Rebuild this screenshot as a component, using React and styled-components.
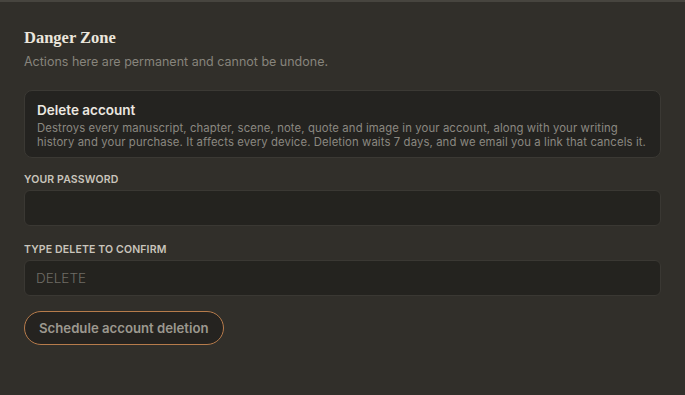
import React from 'react';
import styled, { createGlobalStyle } from 'styled-components';

const Global = createGlobalStyle`
  html, body {
    margin: 0;
    padding: 0;
    background: #312f2a;
  }
  body {
    font-family: Inter, 'Noto Sans', sans-serif;
    -webkit-font-smoothing: antialiased;
  }
`;

const Section = styled.section`
  box-sizing: border-box;
  width: 685px;
  min-height: 395px;
  border-top: 2px solid #47453f;
  background: #312f2a;
  padding: 25px 24px 24px 24px;
  display: flex;
  flex-direction: column;
`;

const Title = styled.h2`
  margin: 0;
  font-family: 'Liberation Serif', 'DejaVu Serif', serif;
  font-weight: 700;
  font-size: 16.5px;
  line-height: 22px;
  color: #ebe6dc;
`;

const Subtitle = styled.p`
  margin: 4px 0 0 0;
  font-size: 12.5px;
  line-height: 18px;
  color: #87847c;
`;

const Card = styled.div`
  margin-top: 19px;
  background: #242320;
  border: 1px solid #3b3934;
  border-radius: 8px;
  padding: 10px 8px 8px 12px;
`;

const CardTitle = styled.div`
  font-size: 13.5px;
  font-weight: 600;
  line-height: 18px;
  color: #ece8e0;
`;

const CardText = styled.p`
  margin: 2px 0 0 0;
  font-size: 11.3px;
  letter-spacing: 0.12px;
  line-height: 14px;
  color: #8b8880;
`;

const Field = styled.label`
  display: flex;
  flex-direction: column;
  gap: 3px;
  margin-top: ${p => p.$top}px;
`;

const Label = styled.span`
  font-size: 10.5px;
  font-weight: 600;
  letter-spacing: 0.15px;
  line-height: 14px;
  color: #c9c5bc;
  text-transform: uppercase;
`;

const Input = styled.input`
  box-sizing: border-box;
  height: 36px;
  width: 100%;
  background: #24231f;
  border: 1px solid #3a3833;
  border-radius: 6px;
  padding: 0 11px;
  font-family: Inter, 'Noto Sans', sans-serif;
  font-size: 13.5px;
  font-weight: 300;
  color: #e4e0d6;
  outline: none;

  &::placeholder {
    color: #6f6c65;
  }
`;

const Button = styled.button`
  align-self: flex-start;
  margin-top: 15px;
  height: 34px;
  padding: 0 14px;
  border-radius: 17px;
  border: 1px solid #b67b4b;
  background: #252320;
  font-family: Inter, 'Noto Sans', sans-serif;
  font-size: 13.2px;
  font-weight: 600;
  color: #9c988f;
  cursor: pointer;
`;

export default function App() {
  return (
    <>
      <Global />
      <Section>
        <Title>Danger Zone</Title>
        <Subtitle>Actions here are permanent and cannot be undone.</Subtitle>
        <Card>
          <CardTitle>Delete account</CardTitle>
          <CardText>
            Destroys every manuscript, chapter, scene, note, quote and image in your account, along with your writing
            history and your purchase. It affects every device. Deletion waits 7 days, and we email you a link that cancels it.
          </CardText>
        </Card>
        <Field $top={15}>
          <Label>Your password</Label>
          <Input type="password" />
        </Field>
        <Field $top={17}>
          <Label>Type DELETE to confirm</Label>
          <Input type="text" placeholder="DELETE" />
        </Field>
        <Button type="button">Schedule account deletion</Button>
      </Section>
    </>
  );
}
